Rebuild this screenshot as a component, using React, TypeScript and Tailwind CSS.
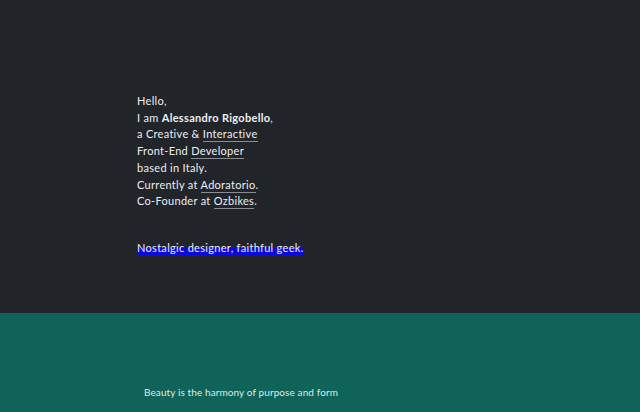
const Link = ({ children }: { children: React.ReactNode }) => (
    <a href="#" className="border-b border-[#8a8d92] pb-[1px]">
        {children}
    </a>
);

const App = () => {
    return (
        <div className="w-full min-h-[412px] font-['Lato',sans-serif] text-[11px]">
            <section className="bg-[#212429] h-[313px] pt-[93px] pl-[137px] text-[#eceff1] leading-[16.7px] tracking-[0.3px]">
                <p>
                    Hello,
                    <br />I am <strong className="font-bold">Alessandro Rigobello</strong>,
                    <br />a Creative &amp; <Link>Interactive</Link>
                    <br />
                    Front-End <Link>Developer</Link>
                    <br />
                    based in Italy.
                    <br />
                    Currently at <Link>Adoratorio</Link>.
                    <br />
                    Co-Founder at <Link>Ozbikes</Link>.
                </p>
                <p className="mt-[30px]">
                    <span className="bg-[linear-gradient(transparent_52%,#0a0adf_52%)] pb-[1px]">
                        Nostalgic designer, faithful geek.
                    </span>
                </p>
            </section>
            <section className="bg-[#0f6359] h-[99px] pt-[72px] pl-[144px] text-[#dcecea] text-[10px] tracking-[0.1px]">
                <p>Beauty is the harmony of purpose and form</p>
            </section>
        </div>
    );
};

export default App;
